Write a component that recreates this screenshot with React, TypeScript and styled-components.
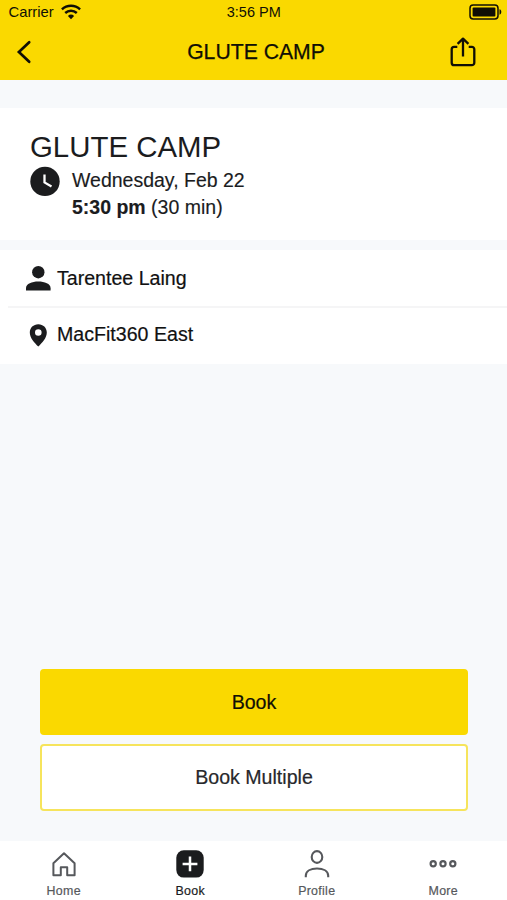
import React from "react";
import styled, { createGlobalStyle } from "styled-components";

const YELLOW = "#fad900";
const INK = "#1b1c1e";

const GlobalStyle = createGlobalStyle`
  * { box-sizing: border-box; }
  body { margin: 0; background: #f7f9fb; }
  svg { display: block; flex: none; overflow: visible; }
`;

const Screen = styled.div`
  width: 100%;
  height: 100vh;
  display: flex;
  flex-direction: column;
  overflow: hidden;
  background: #f7f9fb;
  color: ${INK};
  font-family: "Liberation Sans", Arial, sans-serif;
`;

const TopArea = styled.header`
  height: 80px;
  background: ${YELLOW};
  color: #100f05;
`;

const StatusBar = styled.div`
  display: grid;
  grid-template-columns: 1fr auto 1fr;
  align-items: center;
  height: 24px;
  padding: 0 5px 0 8.5px;
  font-size: 14.5px;
`;

const Carrier = styled.div`
  display: flex;
  align-items: center;
  gap: 7px;
  font-size: 14.8px;
`;

const Time = styled.div`
  padding-right: 3px;
`;

const BatterySlot = styled.div`
  display: flex;
  justify-content: flex-end;
`;

const NavBar = styled.div`
  display: grid;
  grid-template-columns: 60px 1fr 60px;
  align-items: center;
  height: 56px;
`;

const IconButton = styled.button<{ $inset: number }>`
  border: 0;
  padding: 0 0 0 ${(p) => p.$inset}px;
  background: none;
  color: inherit;
`;

const NavTitle = styled.h1`
  margin: 0;
  padding-left: 5px;
  text-align: center;
  font-size: 21.2px;
  line-height: 26px;
  font-weight: 400;
  -webkit-text-stroke: 0.25px currentColor;
`;

const SessionCard = styled.section`
  height: 132px;
  margin-top: 28px;
  padding: 21px 30px 0;
  background: #fff;
`;

const SessionTitle = styled.h2`
  margin: 0;
  font-size: 29.4px;
  line-height: 36px;
  font-weight: 400;
`;

const Schedule = styled.div`
  display: flex;
  gap: 12px;
  font-size: 19.5px;
  line-height: 27px;
  padding-top: 2px;
`;

const When = styled.div`
  -webkit-text-stroke: 0.15px currentColor;
`;

const Details = styled.section`
  margin-top: 10px;
  padding-left: 8px;
  background: #fff;
`;

const DetailRow = styled.div`
  display: flex;
  align-items: center;
  gap: 6px;
  height: 56px;
  padding-left: 17px;
  font-size: 19.6px;
  color: #111;
  -webkit-text-stroke: 0.2px currentColor;
  & + & {
    height: 58px;
    border-top: 2px solid #f5f5f6;
    padding-bottom: 4px;
  }
`;

const Actions = styled.div`
  display: flex;
  flex-direction: column;
  gap: 9px;
  margin-top: auto;
  padding: 0 39px 30px 40px;
`;

const ActionButton = styled.button<{ $primary?: boolean }>`
  height: ${(p) => (p.$primary ? 66 : 67)}px;
  border: 2px solid ${(p) => (p.$primary ? YELLOW : "#f6e45c")};
  border-radius: 4px;
  background: ${(p) => (p.$primary ? YELLOW : "#fff")};
  color: ${(p) => (p.$primary ? "#100f05" : "#27282b")};
  font-family: inherit;
  font-size: 19.6px;
  -webkit-text-stroke: 0.2px currentColor;
`;

const TabBar = styled.nav`
  display: grid;
  grid-template-columns: repeat(4, 126.5px);
  height: 59px;
  padding-left: 0.5px;
  background: #fff;
`;

const Tab = styled.div<{ $active?: boolean }>`
  display: flex;
  flex-direction: column;
  align-items: center;
  padding-top: 8px;
  gap: 5px;
  font-size: 12.4px;
  line-height: 15px;
  letter-spacing: 0.3px;
  color: ${(p) => (p.$active ? INK : "#56585c")};
  -webkit-text-stroke: 0.2px currentColor;
`;

const WifiIcon = () => (
  <svg width="20" height="16" viewBox="0 0 20 16" fill="none" stroke="currentColor" strokeWidth="2.4">
    <path d="M.9 5.4a13.2 13.2 0 0 1 18.2 0M4.2 9a8.5 8.5 0 0 1 11.6 0" />
    <path d="M10 15.2 6.9 12a4.5 4.5 0 0 1 6.2 0Z" fill="currentColor" stroke="none" />
  </svg>
);

const BatteryIcon = () => (
  <svg width="33" height="16" viewBox="0 0 33 16" fill="none">
    <rect x="1" y="1" width="28" height="14" rx="3.2" stroke="currentColor" strokeWidth="1.5" />
    <rect x="3.6" y="3.6" width="22.8" height="8.8" rx="1" fill="currentColor" />
    <path d="M30.5 5.3c2.4.5 2.4 4.9 0 5.4Z" fill="currentColor" />
  </svg>
);

const BackIcon = () => (
  <svg width="16" height="24" viewBox="0 0 16 24" fill="none" stroke="currentColor" strokeWidth="2.7">
    <path d="M13.2 2.2 2.9 12l10.3 9.8" strokeLinecap="round" strokeLinejoin="miter" />
  </svg>
);

const ShareIcon = () => (
  <svg width="26" height="30" viewBox="0 0 26 30" fill="none" stroke="currentColor" strokeWidth="2.3">
    <path d="M7.3 9.8H4.2a2.5 2.5 0 0 0-2.5 2.5v13.4a2.5 2.5 0 0 0 2.5 2.5h17.6a2.5 2.5 0 0 0 2.5-2.5V12.3a2.5 2.5 0 0 0-2.5-2.5h-3.1" />
    <path d="M13 19.4V2M7.6 6.8 13 1.6l5.4 5.2" strokeLinejoin="round" />
  </svg>
);

const ClockIcon = () => (
  <svg width="30" height="30" viewBox="0 0 30 30">
    <circle cx="15" cy="14.4" r="14.7" fill={INK} />
    <path d="M14.5 7.4v8l7 4" fill="none" stroke="#fff" strokeWidth="2.3" />
  </svg>
);

const PersonIcon = () => (
  <svg width="26" height="26" viewBox="0 0 26 26" fill={INK}>
    <circle cx="13.3" cy="7.2" r="6.2" />
    <path d="M1 25.4v-2.2c0-4.4 6-6.6 12.3-6.6s12.3 2.2 12.3 6.6v2.2Z" />
  </svg>
);

const PinIcon = () => (
  <svg width="26" height="26" viewBox="0 0 26 26">
    <path
      d="M13.3 3.2C8.4 3.2 4.8 6.8 4.8 11.4c0 5.7 4.8 10.2 8.5 14.2 3.7-4 8.5-8.5 8.5-14.2 0-4.6-3.6-8.2-8.5-8.2Zm0 5a3.3 3.3 0 1 1 0 6.6 3.3 3.3 0 0 1 0-6.6Z"
      fill={INK}
      fillRule="evenodd"
    />
  </svg>
);

const HomeIcon = () => (
  <svg width="28" height="30" viewBox="0 0 28 30" fill="none" stroke="currentColor" strokeWidth="2">
    <path d="M14 4.2 3.4 14.2v12.1h7.4v-8.1h6.4v8.1h7.4V14.2Z" strokeLinejoin="round" />
  </svg>
);

const AddIcon = () => (
  <svg width="28" height="30" viewBox="0 0 28 30">
    <rect x=".3" y="1.2" width="27.4" height="27.4" rx="7.5" fill="currentColor" />
    <path d="M14 7.5v14.8M6.6 14.9h14.8" stroke="#fff" strokeWidth="2.5" />
  </svg>
);

const ProfileIcon = () => (
  <svg width="28" height="30" viewBox="0 0 28 30" fill="none" stroke="currentColor" strokeWidth="2.1">
    <ellipse cx="14" cy="8" rx="5.3" ry="5.9" />
    <path d="M2.8 28.2v-1.4c0-4.8 5-7.3 11.2-7.3s11.2 2.5 11.2 7.3v1.4" />
  </svg>
);

const MoreIcon = () => (
  <svg width="28" height="30" viewBox="0 0 28 30" fill="none" stroke="currentColor" strokeWidth="2.2">
    <circle cx="4.2" cy="14.8" r="2.6" />
    <circle cx="14" cy="14.8" r="2.6" />
    <circle cx="23.8" cy="14.8" r="2.6" />
  </svg>
);

export default function App() {
  return (
    <>
      <GlobalStyle />
      <Screen>
        <TopArea>
          <StatusBar>
            <Carrier>Carrier <WifiIcon /></Carrier>
            <Time>3:56 PM</Time>
            <BatterySlot><BatteryIcon /></BatterySlot>
          </StatusBar>
          <NavBar>
            <IconButton $inset={16} aria-label="Back"><BackIcon /></IconButton>
            <NavTitle>GLUTE CAMP</NavTitle>
            <IconButton $inset={3} aria-label="Share"><ShareIcon /></IconButton>
          </NavBar>
        </TopArea>
        <SessionCard>
          <SessionTitle>GLUTE CAMP</SessionTitle>
          <Schedule>
            <ClockIcon />
            <When>
              <div>Wednesday, Feb 22</div>
              <div><b>5:30 pm</b> (30 min)</div>
            </When>
          </Schedule>
        </SessionCard>
        <Details>
          <DetailRow><PersonIcon />Tarentee Laing</DetailRow>
          <DetailRow><PinIcon />MacFit360 East</DetailRow>
        </Details>
        <Actions>
          <ActionButton $primary>Book</ActionButton>
          <ActionButton>Book Multiple</ActionButton>
        </Actions>
        <TabBar>
          <Tab><HomeIcon />Home</Tab>
          <Tab $active><AddIcon />Book</Tab>
          <Tab><ProfileIcon />Profile</Tab>
          <Tab><MoreIcon />More</Tab>
        </TabBar>
      </Screen>
    </>
  );
}
